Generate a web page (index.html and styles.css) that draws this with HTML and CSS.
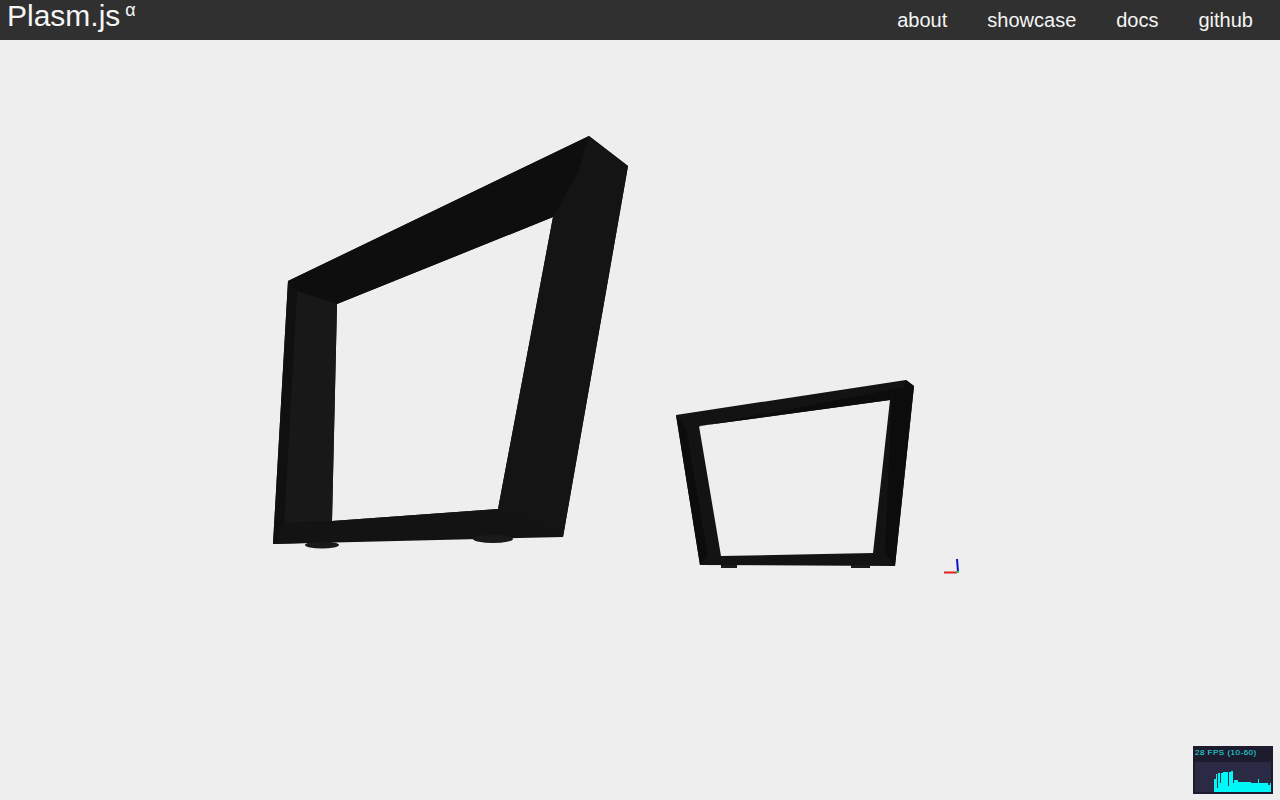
FILE: index.html
```html
<!DOCTYPE html>
<html lang="en">
<head>
    <meta charset="UTF-8">
    <meta name="viewport" content="width=device-width, initial-scale=1.0">
    <title>Plasm.js</title>
    <link rel="stylesheet" href="styles.css">
</head>
<body>
    <header class="navbar">
        <a class="brand" href="#">Plasm.js<sup class="alpha">α</sup></a>
        <nav class="nav-links">
            <a href="#">about</a>
            <a href="#">showcase</a>
            <a href="#">docs</a>
            <a href="#">github</a>
        </nav>
    </header>
    <main class="viewer">
        <svg class="scene" viewBox="0 40 1280 760" width="1280" height="760">
            <!-- big table frame -->
            <path class="f-mid" fill-rule="evenodd" d="M288 281 L589 136 L628 166 L563 537 L273 544 Z M337 304 L332 521 L498 509 L553 217 Z"/>
            <polygon class="f-dark" points="288,281 589,136 578,172 553,217 337,304 297,291"/>
            <polygon class="f-side" points="578,172 589,136 628,166 563,537 498,509 553,217"/>
            <polygon class="f-light" points="297,291 337,304 332,521 284,523"/>
            <polygon class="f-edge" points="288,281 297,291 284,523 273,544"/>
            <polygon class="f-mid" points="284,523 332,521 498,509 516,536 273,544"/>
            <ellipse class="f-foot" cx="322" cy="545" rx="17" ry="3.5"/>
            <ellipse class="f-foot" cx="493" cy="539" rx="20" ry="4"/>
            <!-- small table frame -->
            <path class="f-mid" fill-rule="evenodd" d="M676 415 L906 380 L914 386 L895 566 L700 565 Z M699 426 L721 556 L873 553 L890 400 Z"/>
            <polygon class="f-black" points="686,429 699,426 890,400 892,392 904,388 890,390"/>
            <polygon class="f-black" points="904,388 906,380 914,386 895,566 885,553 892,392"/>
            <polygon class="f-black" points="676,415 686,429 708,556 700,565"/>
            <rect class="f-foot" x="721" y="565" width="16" height="3"/>
            <rect class="f-foot" x="851" y="565" width="19" height="3"/>
            <!-- axes -->
            <line class="axis-x" x1="944" y1="572.5" x2="957" y2="572.5"/>
            <line class="axis-z" x1="957" y1="559" x2="958" y2="572"/>
            <rect class="axis-y" x="956" y="571" width="3" height="2"/>
        </svg>
    </main>
    <div class="stats">
        <div class="stats-label">28 FPS (10-60)</div>
        <svg class="stats-graph" viewBox="0 0 76 30" width="76" height="30">
            <polygon points="0,30 0,17 2,17 2,12 3,12 3,26 4,26 4,11 6,11 6,21 7,21 7,11 9,11 9,10 14,10 14,24 15,24 15,10 17,10 17,9 19,9 19,21 20,21 20,18 24,18 24,20 37,20 37,21 44,21 44,17 45,17 45,21 54,21 54,23 56,23 56,21 58,21 58,24 62,24 62,30"/>
        </svg>
    </div>
</body>
</html>
```

FILE: styles.css
```css
html, body {
    margin: 0;
    padding: 0;
    height: 100%;
    overflow: hidden;
}

body {
    background: #eeeeee;
    font-family: "Liberation Sans", Arial, sans-serif;
    display: flex;
    flex-direction: column;
}

.navbar {
    height: 40px;
    flex-shrink: 0;
    background: #303030;
    display: flex;
    justify-content: space-between;
    align-items: flex-start;
    padding: 0 27px 0 7px;
}

.navbar a {
    color: #f5f5f5;
    text-decoration: none;
}

.brand {
    font-size: 30px;
    line-height: 31px;
    display: flex;
    align-items: flex-start;
}

.alpha {
    font-size: 18px;
    line-height: 20px;
    margin-left: 5px;
}

.nav-links {
    display: flex;
    gap: 40px;
    font-size: 20px;
    line-height: 40px;
}

.viewer {
    flex: 1;
}

.scene {
    display: block;
}

.f-mid { fill: #131313; }
.f-dark { fill: #0e0e0e; }
.f-side { fill: #141414; }
.f-light { fill: #181818; }
.f-edge { fill: #101010; }
.f-black { fill: #0c0c0c; }
.f-foot { fill: #1a1a1a; }

.axis-x { stroke: #e02020; stroke-width: 2; }
.axis-z { stroke: #1010d8; stroke-width: 2; }
.axis-y { fill: #40c040; }

/* fps meter, sits over the canvas */
.stats {
    position: fixed;
    right: 7px;
    bottom: 6px;
    width: 80px;
    height: 48px;
    box-sizing: border-box;
    background: #1c1c2e;
    padding: 0 2px;
}

.stats-label {
    color: #22e8e8;
    font-size: 8px;
    line-height: 14px;
    letter-spacing: 0.5px;
    white-space: nowrap;
}

.stats-graph {
    display: block;
    margin-top: 2px;
    background: #2a2a44;
}

.stats-graph polygon {
    fill: #00f8f8;
    transform: translateX(19px);
}
```
